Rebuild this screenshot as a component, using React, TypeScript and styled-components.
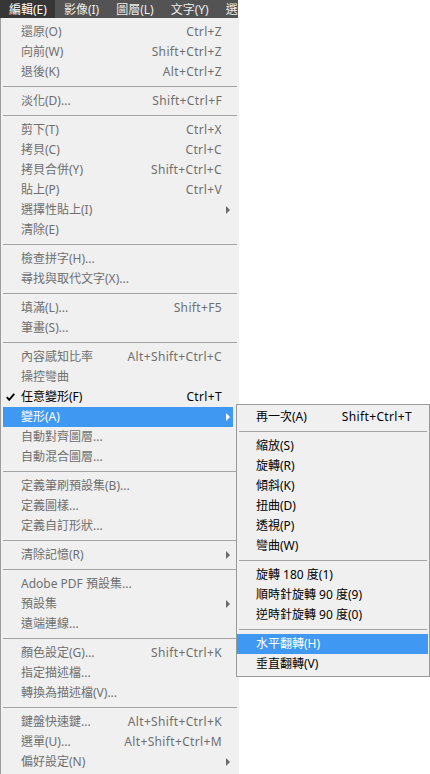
import React from 'react';
import styled, { createGlobalStyle } from 'styled-components';

const GlobalStyle = createGlobalStyle`
  html, body { margin: 0; padding: 0; background: #ffffff; overflow: hidden; }
  body {
    font-family: "Noto Sans", "Noto Sans CJK TC", sans-serif;
    font-size: 12px;
    -webkit-font-smoothing: antialiased;
  }
  * { box-sizing: border-box; }
`;

type Tone = 'off' | 'on' | 'hot';

type Entry =
  | { kind: 'sep' }
  | {
      kind: 'item';
      label: string;
      shortcut?: string;
      sub?: boolean;
      tone?: Tone;
      checked?: boolean;
      children?: Entry[];
    };

const sep: Entry = { kind: 'sep' };
const it = (label: string, extra: Partial<Omit<Extract<Entry, { kind: 'item' }>, 'kind' | 'label'>> = {}): Entry => ({
  kind: 'item',
  label,
  ...extra,
});

const transformMenu: Entry[] = [
  it('再一次(A)', { shortcut: 'Shift+Ctrl+T', tone: 'on' }),
  sep,
  it('縮放(S)', { tone: 'on' }),
  it('旋轉(R)', { tone: 'on' }),
  it('傾斜(K)', { tone: 'on' }),
  it('扭曲(D)', { tone: 'on' }),
  it('透視(P)', { tone: 'on' }),
  it('彎曲(W)', { tone: 'on' }),
  sep,
  it('旋轉 180 度(1)', { tone: 'on' }),
  it('順時針旋轉 90 度(9)', { tone: 'on' }),
  it('逆時針旋轉 90 度(0)', { tone: 'on' }),
  sep,
  it('水平翻轉(H)', { tone: 'hot' }),
  it('垂直翻轉(V)', { tone: 'on' }),
];

const editMenu: Entry[] = [
  it('還原(O)', { shortcut: 'Ctrl+Z' }),
  it('向前(W)', { shortcut: 'Shift+Ctrl+Z' }),
  it('退後(K)', { shortcut: 'Alt+Ctrl+Z' }),
  sep,
  it('淡化(D)...', { shortcut: 'Shift+Ctrl+F' }),
  sep,
  it('剪下(T)', { shortcut: 'Ctrl+X' }),
  it('拷貝(C)', { shortcut: 'Ctrl+C' }),
  it('拷貝合併(Y)', { shortcut: 'Shift+Ctrl+C' }),
  it('貼上(P)', { shortcut: 'Ctrl+V' }),
  it('選擇性貼上(I)', { sub: true }),
  it('清除(E)'),
  sep,
  it('檢查拼字(H)...'),
  it('尋找與取代文字(X)...'),
  sep,
  it('填滿(L)...', { shortcut: 'Shift+F5' }),
  it('筆畫(S)...'),
  sep,
  it('內容感知比率', { shortcut: 'Alt+Shift+Ctrl+C' }),
  it('操控彎曲'),
  it('任意變形(F)', { shortcut: 'Ctrl+T', tone: 'on', checked: true }),
  it('變形(A)', { sub: true, tone: 'hot', children: transformMenu }),
  it('自動對齊圖層...'),
  it('自動混合圖層...'),
  sep,
  it('定義筆刷預設集(B)...'),
  it('定義圖樣...'),
  it('定義自訂形狀...'),
  sep,
  it('清除記憶(R)', { sub: true }),
  sep,
  it('Adobe PDF 預設集...'),
  it('預設集', { sub: true }),
  it('遠端連線...'),
  sep,
  it('顏色設定(G)...', { shortcut: 'Shift+Ctrl+K' }),
  it('指定描述檔...'),
  it('轉換為描述檔(V)...'),
  sep,
  it('鍵盤快速鍵...', { shortcut: 'Alt+Shift+Ctrl+K' }),
  it('選單(U)...', { shortcut: 'Alt+Shift+Ctrl+M' }),
  it('偏好設定(N)', { sub: true }),
];

const barItems = ['編輯(E)', '影像(I)', '圖層(L)', '文字(Y)', '選取(S)'];

/* ---------- layout ---------- */

const Page = styled.div`
  width: 430px;
  height: 774px;
  overflow: hidden;
  display: flex;
  flex-direction: column;
  align-items: flex-start;
`;

const MenuBar = styled.nav`
  display: flex;
  width: 238px;
  height: 18px;
  background: #535353;
  overflow: hidden;
  white-space: nowrap;
  flex: none;
`;

const BarItem = styled.div<{ $open?: boolean }>`
  flex: none;
  display: flex;
  align-items: center;
  height: 100%;
  padding: 0 8px 0 9px;
  color: ${(p) => (p.$open ? '#ffffff' : '#ececec')};
  background: ${(p) => (p.$open ? '#363636' : 'transparent')};
`;

type Geometry = { lead: number; trail: number; left: number; right: number; sepLeft: number; sepRight: number };

const mainGeo: Geometry = { lead: 18, trail: 11, left: 2, right: 6, sepLeft: 2, sepRight: 2 };
const subGeo: Geometry = { lead: 19, trail: 16, left: 0, right: 1, sepLeft: 2, sepRight: 2 };

const MainPanel = styled.div`
  position: relative;
  width: 239px;
  flex: none;
  display: flex;
  flex-direction: column;
  padding: 4px 0 2px;
  background: #f0f0f0;
  border-left: 1px solid #9c9c9c;
`;

const SubPanel = styled.div`
  position: absolute;
  top: -3px;
  left: calc(100% + 3px);
  width: 194px;
  display: flex;
  flex-direction: column;
  padding: 2px 0;
  background: #f0f0f0;
  border: 1px solid #999999;
  z-index: 2;
`;

const toneColor: Record<Tone, string> = { off: '#6f6f6f', on: '#000000', hot: '#ffffff' };

const Row = styled.div<{ $tone: Tone; $geo: Geometry }>`
  position: relative;
  display: grid;
  grid-template-columns: ${(p) => p.$geo.lead}px 1fr auto ${(p) => p.$geo.trail}px;
  align-items: center;
  height: 20px;
  margin: 0 ${(p) => p.$geo.right}px 0 ${(p) => p.$geo.left}px;
  background: ${(p) => (p.$tone === 'hot' ? '#3f98f2' : 'transparent')};
  color: ${(p) => toneColor[p.$tone]};
  white-space: nowrap;
  line-height: 20px;
`;

const Label = styled.span`
  overflow: hidden;
`;

const Shortcut = styled.span`
  text-align: right;
  padding-left: 12px;
  letter-spacing: 0.35px;
`;

const CheckSlot = styled.span`
  display: flex;
  align-items: center;
  padding-left: 3px;
  height: 100%;
`;

const ArrowSlot = styled.span`
  display: flex;
  align-items: center;
  padding-left: 4px;
  height: 100%;
`;

const Arrow = styled.span<{ $tone: Tone }>`
  width: 0;
  height: 0;
  border-top: 4px solid transparent;
  border-bottom: 4px solid transparent;
  border-left: 4px solid ${(p) => (p.$tone === 'hot' ? '#ffffff' : '#6a6a6a')};
`;

const Separator = styled.div<{ $geo: Geometry }>`
  height: 1px;
  margin: 4px ${(p) => p.$geo.sepRight}px 4px ${(p) => p.$geo.sepLeft}px;
  background: #a3a3a3;
  flex: none;
`;

const Check = () => (
  <svg width="9" height="8" viewBox="0 0 9 8" aria-hidden="true">
    <polyline points="0.8,4.2 3.2,6.8 8.2,0.8" fill="none" stroke="#000" strokeWidth="1.9" />
  </svg>
);

function MenuEntries({ entries, geo }: { entries: Entry[]; geo: Geometry }) {
  return (
    <>
      {entries.map((e, i) => {
        if (e.kind === 'sep') return <Separator key={i} $geo={geo} />;
        const tone: Tone = e.tone ?? 'off';
        return (
          <Row key={i} $tone={tone} $geo={geo}>
            <CheckSlot>{e.checked ? <Check /> : null}</CheckSlot>
            <Label>{e.label}</Label>
            <Shortcut>{e.shortcut ?? ''}</Shortcut>
            <ArrowSlot>{e.sub ? <Arrow $tone={tone} /> : null}</ArrowSlot>
            {e.children ? (
              <SubPanel>
                <MenuEntries entries={e.children} geo={subGeo} />
              </SubPanel>
            ) : null}
          </Row>
        );
      })}
    </>
  );
}

export default function App() {
  return (
    <>
      <GlobalStyle />
      <Page>
        <MenuBar>
          {barItems.map((b, i) => (
            <BarItem key={b} $open={i === 0}>
              {b}
            </BarItem>
          ))}
        </MenuBar>
        <MainPanel>
          <MenuEntries entries={editMenu} geo={mainGeo} />
        </MainPanel>
      </Page>
    </>
  );
}
